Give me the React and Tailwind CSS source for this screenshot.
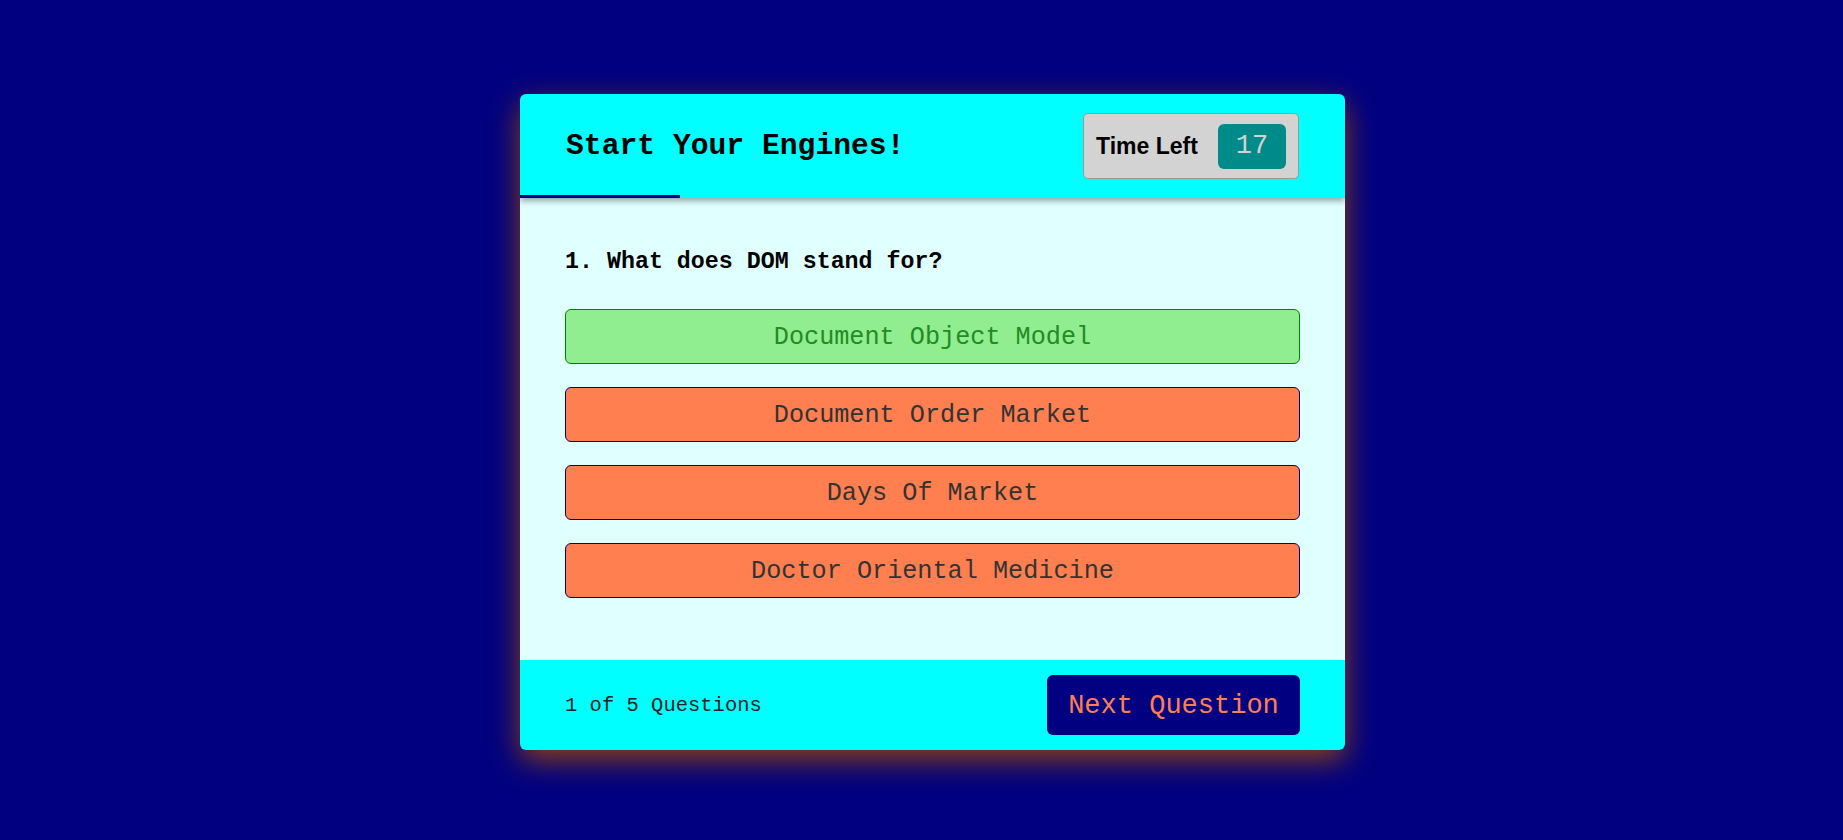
import React from 'react';

const options = [
  { text: 'Document Object Model', correct: true },
  { text: 'Document Order Market', correct: false },
  { text: 'Days Of Market', correct: false },
  { text: 'Doctor Oriental Medicine', correct: false },
];

const mono = "font-['Courier_New','Liberation_Mono',monospace]";

const App = () => {
  return (
    <div className="min-h-screen bg-[#000080] flex items-center justify-center pt-[4px]">
      {/* quiz card */}
      <div className="ml-[22px] w-[825px] rounded-md overflow-hidden shadow-[0_10px_30px_rgba(150,70,10,0.95)]">
        {/* header */}
        <div className="relative z-10 h-[104px] bg-[#00ffff] flex items-center justify-between px-[46px] shadow-[0_3px_6px_rgba(0,0,0,0.35)]">
          <h1 className={`${mono} text-[29.7px] font-bold text-black`}>Start Your Engines!</h1>
          <div className="w-[216px] h-[66px] bg-[#d3d3d3] border border-[#999] rounded-[5px] flex items-center justify-between pl-[12px] pr-[12px]">
            <span className="font-['Arial','Liberation_Sans',sans-serif] text-[23px] font-bold text-black">Time Left</span>
            <span className={`${mono} w-[68px] h-[45px] rounded-[6px] bg-[#008b8b] text-[#d3d3d3] text-[27px] flex items-center justify-center`}>17</span>
          </div>
          <div className="absolute left-0 bottom-0 h-[3px] w-[160px] bg-[#000080]"></div>
        </div>

        {/* question + answers */}
        <div className="bg-[#e0ffff] px-[45px] pt-[50px] pb-[62px]">
          <p className={`${mono} text-[23.3px] leading-[28px] font-bold text-black mb-[33px]`}>1. What does DOM stand for?</p>
          <div className="flex flex-col gap-[23px]">
            {options.map((opt) => (
              <button
                key={opt.text}
                className={`${mono} h-[55px] w-full rounded-[6px] border text-[25.2px] pt-[3px] flex items-center justify-center ${
                  opt.correct
                    ? 'bg-[#90ee90] border-[#008000] text-[#228b22]'
                    : 'bg-[#ff7f50] border-[#000080] text-[#333]'
                }`}
              >
                {opt.text}
              </button>
            ))}
          </div>
        </div>

        {/* footer */}
        <div className="h-[90px] bg-[#00ffff] flex items-center justify-between px-[45px]">
          <span className={`${mono} text-[20.5px] text-[#222] pt-[2px]`}>1 of 5 Questions</span>
          <button className={`${mono} w-[253px] h-[60px] rounded-[6px] bg-[#000080] text-[#ff7f50] text-[27px] pt-[2px]`}>
            Next Question
          </button>
        </div>
      </div>
    </div>
  );
};

export default App;
